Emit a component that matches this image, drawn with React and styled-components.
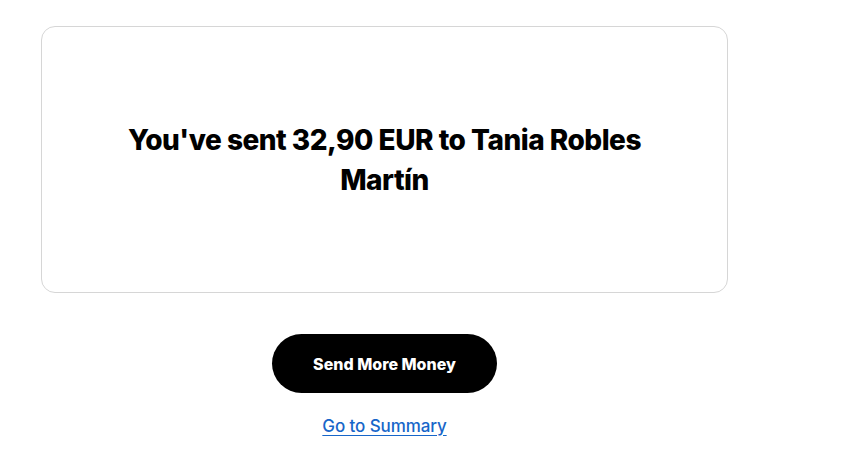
import React from "react";
import styled, { createGlobalStyle } from "styled-components";

const Global = createGlobalStyle`
  html, body { margin: 0; padding: 0; background: #ffffff; }
  body { font-family: Inter, "Noto Sans", sans-serif; color: #000; }
`;

const Page = styled.div`
  padding: 26px 0 0 41px;
`;

const Column = styled.div`
  width: 687px;
  display: flex;
  flex-direction: column;
  align-items: center;
`;

const Card = styled.section`
  box-sizing: border-box;
  width: 100%;
  height: 267px;
  border: 1px solid #d6d6d6;
  border-radius: 14px;
  display: flex;
  align-items: center;
  justify-content: center;
  padding: 0 60px;
`;

const Heading = styled.h1`
  margin: 0;
  max-width: 560px;
  text-align: center;
  font-family: Inter, "Noto Sans", sans-serif;
  font-weight: 800;
  font-size: 28px;
  line-height: 40px;
  letter-spacing: -0.5px;
  color: #000;
`;

const PrimaryButton = styled.button`
  margin-top: 41px;
  width: 225px;
  height: 59px;
  border: none;
  border-radius: 30px;
  background: #000;
  color: #fff;
  font-family: Inter, "Noto Sans", sans-serif;
  font-weight: 800;
  font-size: 16px;
  letter-spacing: 0;
  cursor: pointer;
`;

const TextLink = styled.a`
  margin-top: 20px;
  font-family: Inter, "Noto Sans", sans-serif;
  font-size: 17px;
  line-height: 26px;
  font-weight: 500;
  letter-spacing: -0.1px;
  color: #1766c9;
  text-decoration: underline;
  text-underline-offset: 3px;
  cursor: pointer;
`;

export default function App() {
  return (
    <>
      <Global />
      <Page>
        <Column>
          <Card>
            <Heading>You've sent 32,90 EUR to Tania Robles Martín</Heading>
          </Card>
          <PrimaryButton>Send More Money</PrimaryButton>
          <TextLink href="#">Go to Summary</TextLink>
        </Column>
      </Page>
    </>
  );
}
